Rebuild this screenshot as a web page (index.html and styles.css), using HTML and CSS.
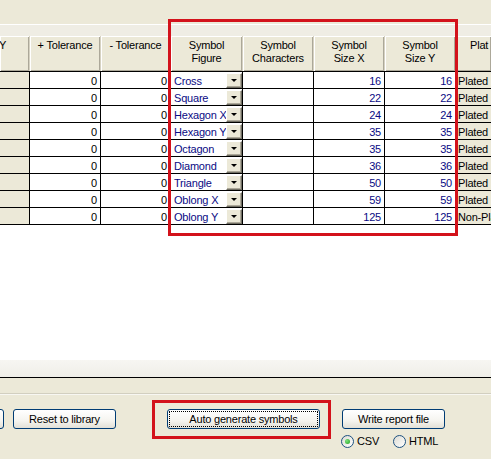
FILE: index.html
```html
<!DOCTYPE html>
<html>
<head>
<meta charset="utf-8">
<link rel="stylesheet" href="styles.css">
</head>
<body>
<div class="screen">
  <div class="top"></div>
  <div class="grid">
    <div class="pad"></div>
    <div class="hrow">
      <div class="hc hc-y">Y</div>
      <div class="hc">+ Tolerance</div>
      <div class="hc">- Tolerance</div>
      <div class="hc">Symbol<br>Figure</div>
      <div class="hc">Symbol<br>Characters</div>
      <div class="hc">Symbol<br>Size X</div>
      <div class="hc">Symbol<br>Size Y</div>
      <div class="hc hc-plat">Plat</div>
    </div>
    <div class="rows">
      <div class="row"><div class="c fix"></div><div class="c num">0</div><div class="c num">0</div><div class="c fig"><span class="t">Cross</span><span class="dd"></span></div><div class="c"></div><div class="c num blue">16</div><div class="c num blue">16</div><div class="c fix plat">Plated</div></div>
      <div class="row"><div class="c fix"></div><div class="c num">0</div><div class="c num">0</div><div class="c fig"><span class="t">Square</span><span class="dd"></span></div><div class="c"></div><div class="c num blue">22</div><div class="c num blue">22</div><div class="c fix plat">Plated</div></div>
      <div class="row"><div class="c fix"></div><div class="c num">0</div><div class="c num">0</div><div class="c fig"><span class="t">Hexagon X</span><span class="dd"></span></div><div class="c"></div><div class="c num blue">24</div><div class="c num blue">24</div><div class="c fix plat">Plated</div></div>
      <div class="row"><div class="c fix"></div><div class="c num">0</div><div class="c num">0</div><div class="c fig"><span class="t">Hexagon Y</span><span class="dd"></span></div><div class="c"></div><div class="c num blue">35</div><div class="c num blue">35</div><div class="c fix plat">Plated</div></div>
      <div class="row"><div class="c fix"></div><div class="c num">0</div><div class="c num">0</div><div class="c fig"><span class="t">Octagon</span><span class="dd"></span></div><div class="c"></div><div class="c num blue">35</div><div class="c num blue">35</div><div class="c fix plat">Plated</div></div>
      <div class="row"><div class="c fix"></div><div class="c num">0</div><div class="c num">0</div><div class="c fig"><span class="t">Diamond</span><span class="dd"></span></div><div class="c"></div><div class="c num blue">36</div><div class="c num blue">36</div><div class="c fix plat">Plated</div></div>
      <div class="row"><div class="c fix"></div><div class="c num">0</div><div class="c num">0</div><div class="c fig"><span class="t">Triangle</span><span class="dd"></span></div><div class="c"></div><div class="c num blue">50</div><div class="c num blue">50</div><div class="c fix plat">Plated</div></div>
      <div class="row"><div class="c fix"></div><div class="c num">0</div><div class="c num">0</div><div class="c fig"><span class="t">Oblong X</span><span class="dd"></span></div><div class="c"></div><div class="c num blue">59</div><div class="c num blue">59</div><div class="c fix plat">Plated</div></div>
      <div class="row"><div class="c fix"></div><div class="c num">0</div><div class="c num">0</div><div class="c fig"><span class="t">Oblong Y</span><span class="dd"></span></div><div class="c"></div><div class="c num blue">125</div><div class="c num blue">125</div><div class="c fix plat">Non-Plated</div></div>
    </div>
    <div class="blank"></div>
    <div class="strip"></div>
  </div>
  <div class="panel">
    <div class="sep"></div>
    <div class="btns">
      <div class="btn btn-cut"></div>
      <div class="btn btn-reset">Reset to library</div>
      <div class="btn btn-auto">Auto generate symbols</div>
      <div class="wgroup">
        <div class="btn btn-write">Write report file</div>
        <div class="radios">
          <div class="radio"><span class="rb on"></span><span>CSV</span></div>
          <div class="radio radio-html"><span class="rb"></span><span>HTML</span></div>
        </div>
      </div>
    </div>
  </div>
  <div class="mark mark-grid"></div>
  <div class="mark mark-btn"></div>
</div>
</body>
</html>
```
FILE: styles.css
```css
html, body { margin: 0; padding: 0; }
body { background: #ECE9D8; }

.screen {
  position: relative;
  width: 491px;
  height: 459px;
  overflow: hidden;
  background: #ECE9D8;
  font-family: "Liberation Sans", Arial, sans-serif;
  font-size: 11px;
  letter-spacing: -0.2px;
  color: #000;
  --cols: 30px 71px 70px 72px 71px 71px 71px 1fr;
}

.top { height: 24px; }

.grid {
  border-top: 1px solid #fff;
  background: #fff;
}

.pad { height: 11px; background: #EFEDE4; }

.hrow {
  display: grid;
  grid-template-columns: var(--cols);
  height: 35px;
  background: #EFEDE4;
}

.hc {
  background: #ECE9D8;
  box-shadow: inset 1px 1px 0 #fff, inset -1px -1px 0 #ACA899;
  border-right: 1px solid #D6D2C2;
  text-align: center;
  padding-top: 3px;
  line-height: 13px;
  white-space: nowrap;
  overflow: hidden;
}
.hc-y { text-align: left; padding-left: 0; text-indent: -1px; }
.hc-plat { text-align: left; padding-left: 14px; border-right: 0; }

.rows { border-top: 1px solid #000; }

.row {
  display: grid;
  grid-template-columns: var(--cols);
  height: 16px;
  border-bottom: 1px solid #000;
}

.c {
  background: #fff;
  border-right: 1px solid #000;
  overflow: hidden;
  white-space: nowrap;
  line-height: 18px;
  height: 16px;
}
.c.fix { background: #ECE9D8; }
.c.plat { border-right: 0; padding-left: 2px; }
.num { text-align: right; padding-right: 3px; }
.blue { color: #0A0A84; }

.fig {
  display: flex;
  align-items: flex-start;
  color: #0A0A84;
}
.fig .t {
  flex: 1;
  overflow: hidden;
  padding-left: 3px;
}
.dd {
  flex: none;
  position: relative;
  width: 16px;
  height: 15px;
  margin-top: 1px;
  box-sizing: border-box;
  background: #ECE9D8;
  border: 1px solid;
  border-color: #fff #716F64 #716F64 #fff;
  box-shadow: inset -1px -1px 0 #ACA899;
}
.dd::after {
  content: "";
  position: absolute;
  left: 4px;
  top: 5px;
  border-left: 3px solid transparent;
  border-right: 3px solid transparent;
  border-top: 3px solid #000;
}

.blank { height: 135px; background: #fff; }

.strip {
  height: 17px;
  background: linear-gradient(#F7F6F2, #EFEEE8);
  border-bottom: 1px solid #000;
}

.panel { height: 81px; }

.sep {
  margin-top: 15px;
  border-top: 1px solid #D2CFC0;
  border-bottom: 1px solid #F8F7F2;
}

.btns {
  display: flex;
  align-items: flex-start;
  margin-top: 14px;
}

.btn {
  box-sizing: border-box;
  height: 20px;
  border: 1px solid #003C74;
  border-radius: 3px;
  background: linear-gradient(#FFFFFF 0%, #F5F4EF 60%, #E3E0D6 100%);
  text-align: center;
  line-height: 18px;
  white-space: nowrap;
}
.btn-cut { width: 64px; margin-left: -60px; }
.btn-reset { width: 103px; margin-left: 9px; }
.btn-auto {
  width: 153px;
  margin-left: 51px;
  outline: 1px dotted #000;
  outline-offset: -3px;
}
.wgroup { margin-left: 22px; }
.btn-write { width: 103px; }

.radios {
  display: flex;
  align-items: center;
  margin-top: 6px;
  margin-left: -1px;
  line-height: 13px;
}
.radio { display: flex; align-items: center; gap: 3px; }
.radio-html { margin-left: 14px; }
.rb {
  position: relative;
  width: 13px;
  height: 13px;
  box-sizing: border-box;
  border-radius: 50%;
  border: 1px solid #1C5180;
  background: linear-gradient(135deg, #DCDBD3, #FFFFFF);
}
.rb.on::after {
  content: "";
  position: absolute;
  left: 3px;
  top: 3px;
  width: 5px;
  height: 5px;
  border-radius: 50%;
  background: radial-gradient(circle at 35% 35%, #7BE27B, #21A121);
}

.mark {
  position: absolute;
  box-sizing: border-box;
  border: 3px solid #D3121B;
}
.mark-grid { left: 168px; top: 19px; width: 290px; height: 217px; }
.mark-btn { left: 152px; top: 400px; width: 179px; height: 39px; }
```
